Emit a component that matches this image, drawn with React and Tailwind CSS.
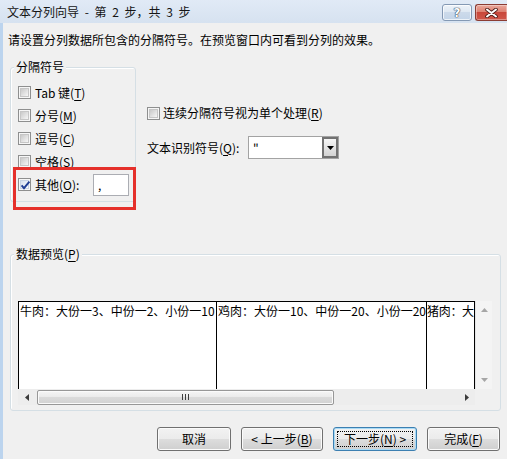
import React from 'react';

const Key = ({ children }) => <span className="underline decoration-1 underline-offset-[2px]">{children}</span>;

const CheckBox = ({ checked }) => (
    <span className="relative flex h-[13px] w-[13px] shrink-0 items-center justify-center border border-[#8e8f8f] bg-[#f6f6f6]">
        <span
            className={
                checked
                    ? 'h-[9px] w-[9px] border border-[#c9d4e4] bg-linear-to-br from-[#d6e0ee] to-[#f8fbff]'
                    : 'h-[9px] w-[9px] border border-[#c6c6c6] bg-linear-to-br from-[#c9c9c9] to-[#f6f6f6]'
            }
        />
        {checked && (
            <svg className="absolute left-[1px] top-[1px]" width="11" height="11" viewBox="0 0 11 11">
                <path d="M1.6 5.4 L4 8.2 L9.4 1.6" fill="none" stroke="#1f3e94" strokeWidth="1.9" />
            </svg>
        )}
    </span>
);

const Arrow = ({ dir, color }) => {
    const paths = {
        up: 'M0 4 L3.5 0 L7 4 Z',
        down: 'M0 0 L7 0 L3.5 4 Z',
        left: 'M4 0 L4 7 L0 3.5 Z',
        right: 'M0 0 L4 3.5 L0 7 Z',
    };
    const vertical = dir === 'up' || dir === 'down';
    return (
        <svg width={vertical ? 7 : 4} height={vertical ? 4 : 7} viewBox={vertical ? '0 0 7 4' : '0 0 4 7'}>
            <path d={paths[dir]} fill={color} />
        </svg>
    );
};

const Button = ({ className, children, isDefault }) => (
    <div
        className={
            isDefault
                ? `flex h-[24px] rounded-[3px] border border-[#3c7fb1] bg-[linear-gradient(#f2f2f2,#ebebeb_50%,#dddddd_50%,#cfcfcf)] p-[3px] shadow-[inset_0_0_0_1px_#a9dbf6] ${className}`
                : `flex h-[24px] items-center justify-center rounded-[3px] border border-[#707070] bg-[linear-gradient(#f2f2f2,#ebebeb_50%,#dddddd_50%,#cfcfcf)] shadow-[inset_0_0_0_1px_#fbfbfb] ${className}`
        }
    >
        {isDefault ? (
            <span className="flex flex-1 items-center justify-center border border-dotted border-black leading-[14px]">{children}</span>
        ) : (
            children
        )}
    </div>
);

const separators = [
    { label: 'Tab 键', key: 'T' },
    { label: '分号', key: 'M' },
    { label: '逗号', key: 'C' },
    { label: '空格', key: 'S' },
];

export default function App() {
    return (
        <div className="relative h-[459px] w-[507px] overflow-hidden bg-[#f0f0f0] font-['Noto_Sans_CJK_SC',sans-serif] text-[12px] text-black">
            {/* title bar */}
            <div className="flex h-[23px] bg-linear-to-b from-[#e1eaf6] to-[#d6e2f0]">
                <span className="ml-[7px] mt-[4px] leading-[16px] text-[#151515] [word-spacing:3px]">文本分列向导 - 第 2 步，共 3 步</span>
                <div className="ml-auto mt-[4px] flex gap-[3px]">
                    <div className="flex h-[17px] w-[30px] items-center justify-center rounded-[3px] border border-[#8499b4] bg-[linear-gradient(#eef3f9,#dde7f2_50%,#ccdaea_50%,#c3d4e8)] shadow-[inset_0_0_0_1px_rgba(255,255,255,0.7)]">
                        <span className="font-['DejaVu_Sans',sans-serif] text-[12px] font-bold leading-none text-white [text-shadow:0_0_1px_#2f3d52,0_0_1px_#2f3d52,0_0_1px_#2f3d52]">?</span>
                    </div>
                    <div className="flex h-[17px] w-[32px] items-center justify-center rounded-l-[3px] border border-r-0 border-[#8b3c33] bg-[linear-gradient(#eaa99d,#dc7c6c_50%,#c9473a_50%,#d0574a)] shadow-[inset_0_0_0_1px_rgba(255,255,255,0.35)]">
                        <svg width="13" height="10" viewBox="0 0 13 10">
                            <path d="M2 1.5 L11 8.5 M11 1.5 L2 8.5" stroke="#4a1a15" strokeWidth="3.6" strokeLinecap="round" />
                            <path d="M2 1.5 L11 8.5 M11 1.5 L2 8.5" stroke="#ffffff" strokeWidth="2" strokeLinecap="round" />
                        </svg>
                    </div>
                </div>
            </div>

            {/* client area */}
            <div className="flex h-[436px] flex-col border-l-[3px] border-[#bcd4ee] pl-[5px] pr-[6px]">
                <p className="mt-[9px] leading-[16px]">请设置分列数据所包含的分隔符号。在预览窗口内可看到分列的效果。</p>

                <div className="ml-[2px] mt-[19px] flex items-start">
                    <div className="w-[126px] rounded-[3px] border border-[#d5dfe5] pb-[5px] shadow-[inset_1px_1px_0_#fff]">
                        <div className="-mt-[9px] mb-[6px] ml-[3px] w-fit bg-[#f0f0f0] px-[2px] leading-[16px]">分隔符号</div>
                        {separators.map((item) => (
                            <div key={item.key} className="flex h-[23px] items-center gap-[4px] pl-[7px]">
                                <CheckBox />
                                <span className="leading-[16px]">
                                    {item.label}(<Key>{item.key}</Key>)
                                </span>
                            </div>
                        ))}
                        <div className="flex h-[23px] items-center gap-[4px] pl-[7px] pr-[6px]">
                            <CheckBox checked />
                            <span className="leading-[16px]">
                                其他(<Key>O</Key>):
                            </span>
                            <div className="ml-auto h-[22px] w-[36px] border border-[#abadb3] bg-white pl-[4px] leading-[20px]">,</div>
                        </div>
                    </div>

                    <div className="ml-[11px] pt-[38px]">
                        <div className="flex h-[16px] items-center gap-[3px]">
                            <CheckBox />
                            <span className="leading-[16px]">
                                连续分隔符号视为单个处理(<Key>R</Key>)
                            </span>
                        </div>
                        <div className="mt-[15px] flex items-center">
                            <span className="w-[101px] leading-[16px]">
                                文本识别符号(<Key>Q</Key>):
                            </span>
                            <div className="flex h-[23px] w-[91px] border border-[#a3a3a3] bg-white">
                                <span className="flex-1 pl-[4px] leading-[21px]">"</span>
                                <div className="flex w-[16px] items-center justify-center border-2 border-[#727272] bg-linear-to-b from-[#f6f6f6] to-[#d3d3d3]">
                                    <Arrow dir="down" color="#000" />
                                </div>
                            </div>
                        </div>
                    </div>
                </div>

                {/* preview */}
                <div className="ml-[2px] mt-[52px] rounded-[3px] border border-[#d5dfe5] pb-[5px] pl-[7px] shadow-[inset_1px_1px_0_#fff]">
                    <div className="-mt-[9px] mb-[39px] -ml-[4px] w-fit bg-[#f0f0f0] px-[2px] leading-[16px]">
                        数据预览(<Key>P</Key>)
                    </div>
                    <div className="grid h-[104px] w-[474px] grid-cols-[457px_17px] grid-rows-[88px_16px]">
                        <div className="flex overflow-hidden border border-b-0 border-black bg-white leading-[16px] whitespace-nowrap">
                            <div className="w-[198px] shrink-0 overflow-hidden border-r border-black pl-[1px] pt-[1px]">牛肉：大份一3、中份一2、小份一10</div>
                            <div className="w-[210px] shrink-0 overflow-hidden border-r border-black pl-[1px] pt-[1px]">鸡肉：大份一10、中份一20、小份一20</div>
                            <div className="min-w-0 flex-1 overflow-hidden pt-[1px] tracking-[-0.3px]">猪肉：大</div>
                        </div>
                        <div className="flex flex-col items-center justify-between border-l border-[#e4e4e4] bg-[#f4f4f4] py-[7px]">
                            <Arrow dir="up" color="#a6a6a6" />
                            <Arrow dir="down" color="#a6a6a6" />
                        </div>
                        <div className="flex items-center bg-[#ededed]">
                            <div className="flex h-full w-[17px] items-center justify-center">
                                <Arrow dir="left" color="#3c3c3c" />
                            </div>
                            <div className="ml-[2px] flex h-[15px] w-[297px] items-center justify-center gap-[2px] rounded-[2px] border border-[#979797] bg-[linear-gradient(#f5f5f5,#e9e9e9_50%,#dadada_50%,#d2d2d2)] shadow-[inset_0_0_0_1px_#fafafa]">
                                <span className="h-[6px] w-[1px] bg-[#3d3d3d]" />
                                <span className="h-[6px] w-[1px] bg-[#3d3d3d]" />
                                <span className="h-[6px] w-[1px] bg-[#3d3d3d]" />
                            </div>
                            <div className="ml-auto flex h-full w-[17px] items-center justify-center">
                                <Arrow dir="right" color="#3c3c3c" />
                            </div>
                        </div>
                        <div className="bg-[#f0f0f0]" />
                    </div>
                </div>

                {/* buttons */}
                <div className="mt-[16px] flex justify-end gap-[10px] pr-[1px]">
                    <Button className="w-[74px]">取消</Button>
                    <Button className="w-[82px]">
                        &lt; 上一步(<Key>B</Key>)
                    </Button>
                    <Button className="w-[84px]" isDefault>
                        下一步(<Key>N</Key>) &gt;
                    </Button>
                    <Button className="w-[73px]">
                        完成(<Key>F</Key>)
                    </Button>
                </div>
            </div>

            {/* red highlight */}
            <div className="pointer-events-none absolute left-[13px] top-[167px] h-[43px] w-[123px] border-[3px] border-[#e5302b]" />
        </div>
    );
}
